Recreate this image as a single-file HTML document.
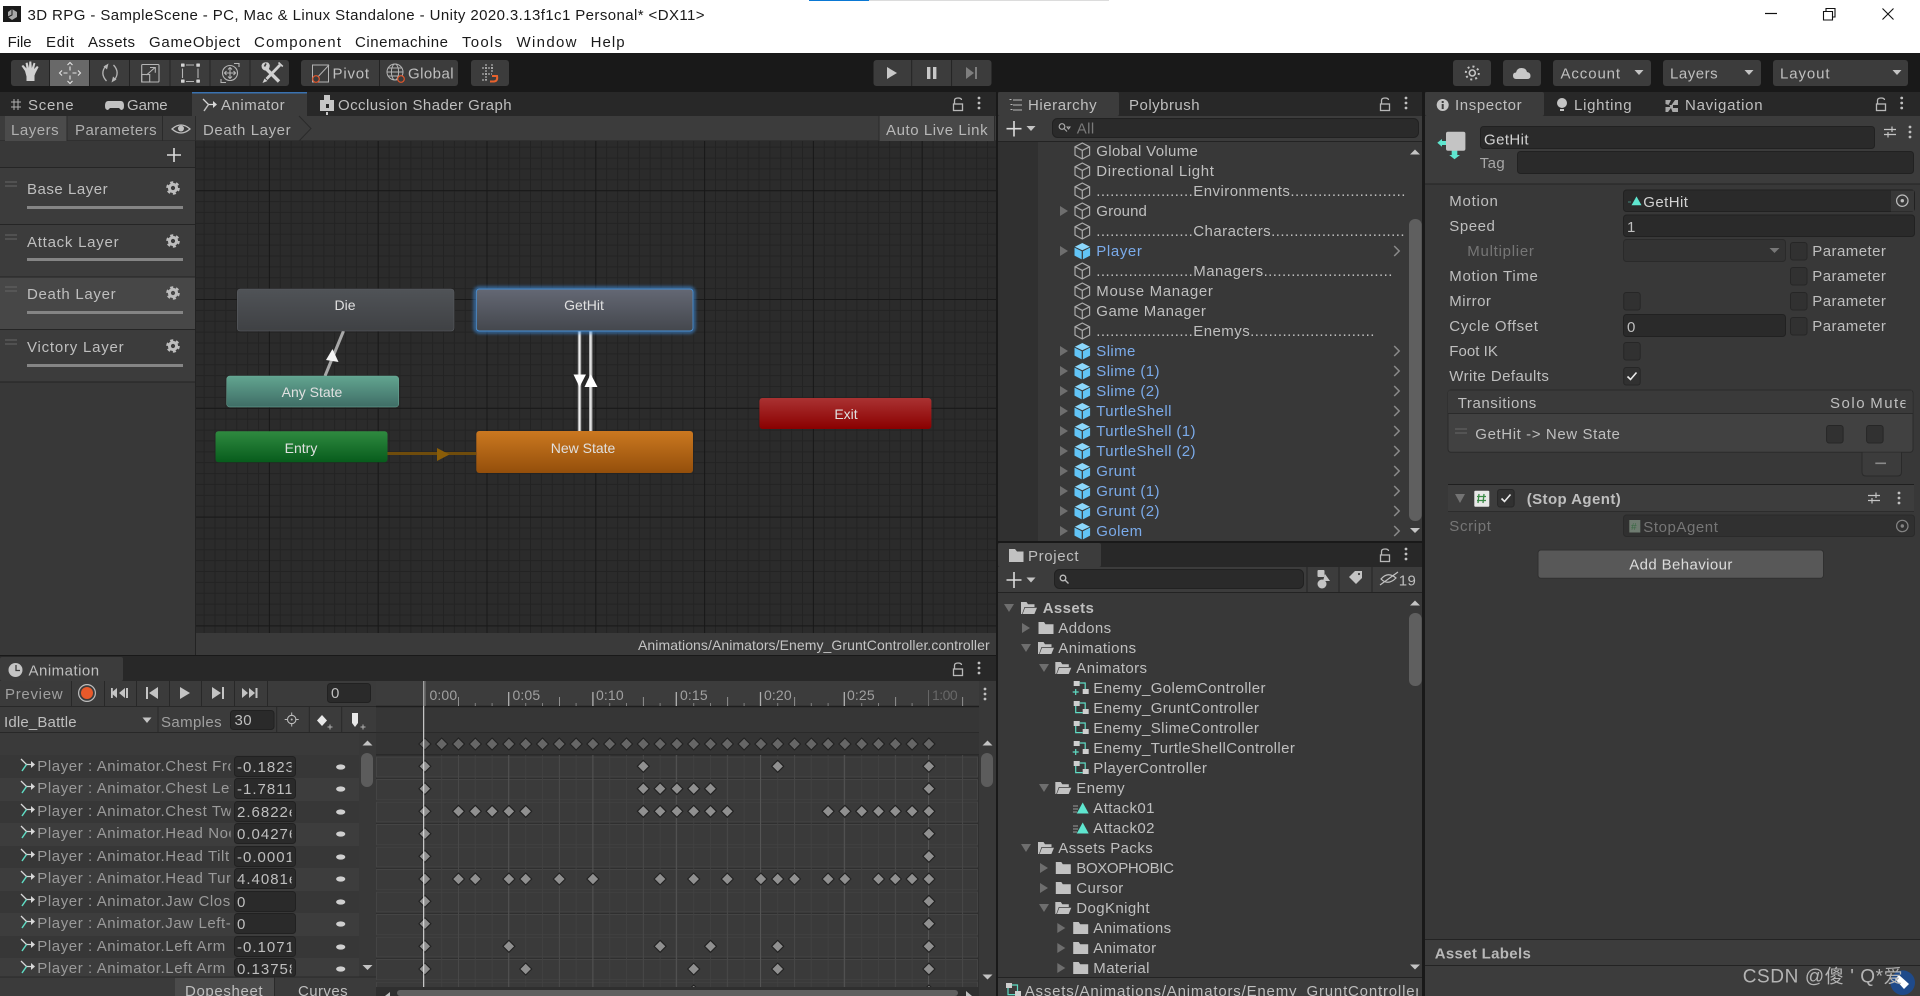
<!DOCTYPE html>
<html lang="en"><head><meta charset="utf-8"><title>Unity Editor</title>
<style>
html,body{margin:0;padding:0;width:1920px;height:996px;overflow:hidden;background:#191919}
svg{display:block}
text{font-family:"Liberation Sans","Noto Sans CJK SC",sans-serif;font-size:15px;fill:#bfbfbf;letter-spacing:.4px;white-space:pre}
.t{fill:#1a1a1a;letter-spacing:0}
.d{fill:#9a9a9a;letter-spacing:.58px}
.dd{fill:#767676}
.b{fill:#7babea}
.n{font-size:14px;fill:#e0e0e0;text-anchor:middle;letter-spacing:0}
.bd{font-weight:bold}
.v{letter-spacing:1px}
.h{letter-spacing:.45px}
</style></head><body>
<svg width="1920" height="996" viewBox="0 0 1920 996" xmlns="http://www.w3.org/2000/svg">
<defs>
<pattern id="g1" x="268.9" y="190.2" width="10.88" height="10.88" patternUnits="userSpaceOnUse"><path d="M.5 0V10.88M0 .5H10.88" stroke="#232323" stroke-width="1" fill="none"/></pattern>
<pattern id="g2" x="268.9" y="190.2" width="108.8" height="108.8" patternUnits="userSpaceOnUse"><path d="M.5 0V108.8M0 .5H108.8" stroke="#181818" stroke-width="1" fill="none"/></pattern>
<pattern id="f1" x="424.4" y="0" width="16.8" height="10" patternUnits="userSpaceOnUse"><path d="M.5 0V10" stroke="#424242" stroke-width="1"/></pattern>
<linearGradient id="nDie" x1="0" y1="0" x2="0" y2="1"><stop offset="0" stop-color="#505357"/><stop offset="1" stop-color="#3f4144"/></linearGradient>
<linearGradient id="nHit" x1="0" y1="0" x2="0" y2="1"><stop offset="0" stop-color="#646874"/><stop offset="1" stop-color="#44474d"/></linearGradient>
<linearGradient id="nAny" x1="0" y1="0" x2="0" y2="1"><stop offset="0" stop-color="#62a590"/><stop offset="1" stop-color="#3f6d66"/></linearGradient>
<linearGradient id="nEnt" x1="0" y1="0" x2="0" y2="1"><stop offset="0" stop-color="#2f8a40"/><stop offset="1" stop-color="#075c1c"/></linearGradient>
<linearGradient id="nNew" x1="0" y1="0" x2="0" y2="1"><stop offset="0" stop-color="#cb7820"/><stop offset="1" stop-color="#944f0b"/></linearGradient>
<linearGradient id="nExit" x1="0" y1="0" x2="0" y2="1"><stop offset="0" stop-color="#aa3232"/><stop offset="1" stop-color="#8a0000"/></linearGradient>
<filter id="bl" x="-10%" y="-30%" width="120%" height="160%"><feGaussianBlur stdDeviation="1.6"/></filter>
<clipPath id="cName"><rect x="20" y="740" width="210.5" height="240"/></clipPath>
<clipPath id="cVal"><rect x="234" y="740" width="57.5" height="240"/></clipPath>
<clipPath id="cKeys"><rect x="376" y="733" width="603" height="254"/></clipPath>
<clipPath id="cHier"><rect x="1040" y="142" width="366" height="399"/></clipPath>
<clipPath id="cFoot"><rect x="1000" y="978" width="418" height="18"/></clipPath>
<clipPath id="cMute"><rect x="1820" y="390" width="85.5" height="24"/></clipPath>
<g id="k"><path d="M0-6 6 0 0 6-6 0z" fill="#909090" stroke="#222" stroke-width="1.1"/></g>
<g id="ks"><path d="M0-6 6 0 0 6-6 0z" fill="#666" stroke="#222" stroke-width="1.1"/></g>
<g id="cube" fill="none" stroke="#aaa" stroke-width="1.2"><path d="M0-8 7.3-4.2V4L0 8-7.3 4V-4.2zM-7.3-4.2 0-.6 7.3-4.2M0-.6V8"/></g>
<g id="bcube"><path d="M0-8 7.5-4.3 0-.8-7.5-4.3z" fill="#8ad6fb"/><path d="M-7.8-3.4-.6.2V8.4L-7.8 4.6z" fill="#62c4f6"/><path d="M7.8-3.4 .6.2V8.4L7.8 4.6z" fill="#62c4f6"/></g>
<path id="ar" d="M-4-5 4 0-4 5z" fill="#6e6e6e"/>
<path id="ad" d="M-5-4H5L0 4z" fill="#6e6e6e"/>
<path id="ch" d="M-2.5-5 2.5 0-2.5 5" fill="none" stroke="#8a8a8a" stroke-width="1.5"/>
<path id="fc" d="M-7.5-6h5.5l1.5 2.2h8v9.8h-15z" fill="#c2c2c2"/>
<g id="fo"><path d="M-8 6V-6h5.5L-1-3.8h6.5V-1H-4.5L-7 6z" fill="#c2c2c2"/><path d="M-4-.2H8L5.4 6H-6.4z" fill="#c2c2c2"/></g>
<g id="ctl"><rect x="-7" y="-7" width="6" height="5" fill="#cfcfcf"/><rect x="2" y="1" width="6" height="5" fill="#cfcfcf"/><path d="M-1-5H4.5V1M-5-2V4.6H2" fill="none" stroke="#5fdcc4" stroke-width="1.2"/></g>
<g id="ctp"><rect x="-7" y="-7" width="6" height="5" fill="#cfcfcf"/><rect x="2" y="1" width="6" height="5" fill="#cfcfcf"/><path d="M-1-5H4.5V1M-5 1V7M-8 4H-2" fill="none" stroke="#5fdcc4" stroke-width="1.2"/></g>
<g id="tri"><path d="M-4.3 5.5 1.7-5.5 7.7 5.5z" fill="#5fe6cf"/><path d="M-8-2H-3M-8 1H-3M-8 4H-4" stroke="#9a9a9a" stroke-width="1"/></g>
<g id="lock" fill="none" stroke="#b8b8b8" stroke-width="1.3"><rect x="-4.5" y="0" width="9" height="6.5"/><path d="M-3.5 0V-3.5Q-3.5-6 0-6 3.5-6 3.5-4"/></g>
<g id="dots" fill="#c0c0c0"><circle cx="0" cy="-5" r="1.4"/><circle cx="0" cy="0" r="1.4"/><circle cx="0" cy="5" r="1.4"/></g>
<g id="gear"><circle r="3.6" fill="none" stroke="#bdbdbd" stroke-width="3"/><circle r="5.6" fill="none" stroke="#bdbdbd" stroke-width="2.4" stroke-dasharray="3 2.86"/></g>
<g id="box"><rect x="-8" y="-8.5" width="16.5" height="17.5" rx="2.5" fill="#313131" stroke="#262626" stroke-width="1"/></g>
<g id="sl" stroke="#c4c4c4" stroke-width="1.2" fill="none"><path d="M-6-2.5H6M-6 2.5H6M2-5.5V0M-2 0V5.5"/></g>
<path id="eq" d="M0 0H12M0 4H12" stroke="#666" stroke-width="1" fill="none"/>
<g id="crv"><path d="M-7-6-1.5-.5H5" fill="none" stroke="#d8d8d8" stroke-width="1.3"/><path d="M3-4 7-.5 3 3z" fill="#d8d8d8"/><path d="M-6 6-1.5-.5" fill="none" stroke="#5fdcc4" stroke-width="1.5"/></g>
<ellipse id="dash" cx="0" cy="0" rx="4.6" ry="2.6" fill="#cfcfcf"/>
<g id="tgt" fill="none"><circle r="5.7" stroke="#bdbdbd" stroke-width="1.2"/><circle r="1.7" fill="#bdbdbd"/></g>
</defs>

<!-- title bar -->
<rect x="0" y="0" width="1920" height="53" fill="#fff"/>
<rect x="809" y="0" width="300" height="1" fill="#dcdcdc"/><rect x="809" y="0" width="60" height="1" fill="#0a78d4"/>
<rect x="3" y="6" width="18" height="16" fill="#1a1a1a"/><path d="M12 9 17 12V17L12 20 8 17V12z" fill="#a8a8a8"/><path d="M12 9V15L8 17" stroke="#1a1a1a" fill="none"/>
<text class="t" x="27.5" y="20" textLength="677">3D RPG - SampleScene - PC, Mac &amp; Linux Standalone - Unity 2020.3.13f1c1 Personal* &lt;DX11&gt;</text>
<g>
<text class="t" x="7.6" y="47" textLength="24">File</text>
<text class="t" x="46" y="47" textLength="28">Edit</text>
<text class="t" x="88" y="47" textLength="47">Assets</text>
<text class="t" x="149" y="47" textLength="91">GameObject</text>
<text class="t" x="254" y="47" textLength="87">Component</text>
<text class="t" x="355" y="47" textLength="93">Cinemachine</text>
<text class="t" x="462" y="47" textLength="40">Tools</text>
<text class="t" x="516.5" y="47" textLength="60">Window</text>
<text class="t" x="590.6" y="47" textLength="34">Help</text>
</g>
<path d="M1765 13.5H1777" stroke="#111" stroke-width="1.2"/>
<path d="M1823.5 11.5h9v8.5h-9zM1826 11.5V8.5h9v8.5h-2.5" fill="none" stroke="#111" stroke-width="1.1"/>
<path d="M1882.5 8.5 1893.5 19.5M1893.5 8.5 1882.5 19.5" stroke="#111" stroke-width="1.1"/>

<!-- toolbar -->
<rect x="0" y="53" width="1920" height="39" fill="#191919"/>
<rect x="11" y="60" width="278" height="26" rx="3" fill="#3c3c3c"/>
<rect x="50" y="60" width="39" height="26" fill="#696969"/>
<path d="M49.5 60V86M89.5 60V86M129.5 60V86M170 60V86M210 60V86M250 60V86" stroke="#232323" stroke-width="1"/>
<path d="M25 71 21.5 66 23.2 65 26.5 68.5 25.6 63 27.6 62.5 29 68 29.3 61.5H31.3L31.8 68 33.6 62.7 35.4 63.3 34 69 37 66 38.6 67 35.5 73 34.5 75.5V81H26.5V76.5z" fill="#d0d0d0"/>
<g stroke="#e4e4e4" stroke-width="1.1" fill="none"><path d="M70 66.5V70.5M70 75.5V79.5M63.5 73H67.5M72.5 73H76.5M67.5 65 70 62.5 72.5 65M67.5 81 70 83.5 72.5 81M62 70.5 59.5 73 62 75.5M78 70.5 80.5 73 78 75.5"/></g>
<path d="M106.5 81Q99.5 73.5 106 65.5M113.5 65Q120.5 72.5 114 80.5" fill="none" stroke="#b4b4b4" stroke-width="1.3"/><path d="M103.5 66.5 108.5 63.5 107 69.5zM116.5 79.5 111.5 82.5 113 76.5z" fill="#b4b4b4"/>
<g fill="none" stroke="#b4b4b4" stroke-width="1.1"><rect x="141.7" y="64.5" width="17.3" height="17.5" rx="1"/><rect x="141.7" y="74.5" width="8" height="7.5"/><path d="M146.5 75 155 67.5M150 67.5H155.3V72.8"/></g>
<path d="M186 65H194M186 81.5H194M182.5 68.5V78M198 68.5V78" stroke="#b4b4b4" stroke-width="1.1" fill="none"/><g fill="#d4d4d4"><rect x="181" y="63.5" width="3.6" height="3.2" rx=".6"/><rect x="196.3" y="63.5" width="3.6" height="3.2" rx=".6"/><rect x="181" y="79.5" width="3.6" height="3.2" rx=".6"/><rect x="196.3" y="79.5" width="3.6" height="3.2" rx=".6"/></g>
<g fill="none" stroke="#b4b4b4" stroke-width="1.1"><circle cx="230" cy="73" r="7.5"/><path d="M230 67.5V78.5M224.5 73H235.5M228 69.5 230 67.5 232 69.5M228 76.5 230 78.5 232 76.5M226.5 71 224.5 73 226.5 75M233.5 71 235.5 73 233.5 75"/><path d="M234 63.5 239 63.5 239 67M226 82.5 221 82.5 221 79"/></g>
<path d="M265 67.5 279 81.5" fill="none" stroke="#d0d0d0" stroke-width="3.4"/><path d="M268 62.5Q262.5 61.5 261.5 65.5 261.5 69.5 265 70.5 268.5 71 269.5 67.5 270.5 64.5 268 62.5z" fill="#d0d0d0"/><path d="M266 63.5 264.5 66.5" stroke="#3c3c3c" stroke-width="1.6"/>
<path d="M280 65 266.5 79" fill="none" stroke="#d0d0d0" stroke-width="2.8"/><path d="M278.5 62.5 282.8 66.5" stroke="#d0d0d0" stroke-width="1.6"/><path d="M264.5 78.5 262.5 83 267.5 81z" fill="#d0d0d0"/>
<rect x="301" y="60" width="157" height="26" rx="3" fill="#3c3c3c"/><path d="M379.5 60V86" stroke="#232323"/>
<rect x="312.5" y="65" width="16" height="17" fill="none" stroke="#b4b4b4" stroke-width="1"/><path d="M329 65 315 80" stroke="#b4b4b4"/><circle cx="316" cy="79" r="3.3" fill="#3c3c3c" stroke="#e0562b" stroke-width="1.2"/>
<text x="332.5" y="78.5" textLength="37">Pivot</text>
<g fill="none" stroke="#b4b4b4" stroke-width="1"><circle cx="395" cy="72" r="8"/><ellipse cx="395" cy="72" rx="3.6" ry="8"/><path d="M387 72H403M388.5 68H401.5M388.5 76H401.5"/></g><circle cx="401" cy="79" r="3.3" fill="#3c3c3c" stroke="#e0562b" stroke-width="1.2"/>
<text x="408" y="78.5" textLength="46">Global</text>
<rect x="471" y="60" width="38" height="26" rx="3" fill="#3c3c3c"/>
<path d="M482 68H494M482 74H492M486 64V80M492 64V72M482 80H487" fill="none" stroke="#c8c8c8" stroke-width="1" stroke-dasharray="2 1"/><path d="M492 76H497Q498 81 494 81.5H490" fill="none" stroke="#e8622d" stroke-width="2"/>
<rect x="873.5" y="60" width="118" height="26" rx="3" fill="#3c3c3c"/><path d="M911.7 60V86M951.6 60V86" stroke="#232323"/>
<path d="M887 67 897 73 887 79z" fill="#c8c8c8"/>
<rect x="927" y="67" width="3.4" height="12" fill="#c8c8c8"/><rect x="933" y="67" width="3.4" height="12" fill="#c8c8c8"/>
<path d="M966 67 974 73 966 79z" fill="#7e7e7e"/><rect x="975" y="67" width="2" height="12" fill="#7e7e7e"/>
<rect x="1453" y="60" width="38" height="26" rx="3" fill="#3c3c3c"/><rect x="1503" y="60" width="38" height="26" rx="3" fill="#3c3c3c"/>
<circle cx="1472.3" cy="73" r="3" fill="none" stroke="#c4c4c4" stroke-width="1.6"/><circle cx="1472.3" cy="73" r="6.5" fill="none" stroke="#c4c4c4" stroke-width="2" stroke-dasharray="2 3.1"/>
<path d="M1516 79Q1513 79 1513 75.5 1513 72.5 1516 72.5 1517 68 1521.5 68 1526 68 1527 72 1530.5 72.5 1530.5 76 1530.5 79 1527 79z" fill="#c8c8c8"/>
<rect x="1553" y="60" width="98" height="26" rx="3" fill="#3c3c3c"/><rect x="1663" y="60" width="98" height="26" rx="3" fill="#3c3c3c"/><rect x="1773" y="60" width="135" height="26" rx="3" fill="#3c3c3c"/>
<text x="1560.5" y="78.5" textLength="60">Account</text><text x="1670" y="78.5" textLength="48">Layers</text><text x="1780" y="78.5" textLength="50">Layout</text>
<path d="M1634.5 70H1643.5L1639 75zM1744.5 70H1753.5L1749 75zM1892.5 70H1901.5L1897 75z" fill="#c4c4c4"/>

<!-- Scene/Animator panel tabs -->
<rect x="0" y="92" width="996" height="24" fill="#282828"/>
<rect x="192" y="92" width="115" height="24" fill="#3c3c3c"/><rect x="192" y="92" width="115" height="1.5" fill="#3a72b0"/>
<path d="M11 102H21M11 107H21M14 99V110M18 99V110" stroke="#b0b0b0" stroke-width="1" fill="none"/>
<text x="28" y="110" textLength="46">Scene</text>
<path d="M108 101H121Q124 101 124 106 124 110 121 110L119 108H110L108 110Q105 110 105 106 105 101 108 101z" fill="#c0c0c0"/>
<text x="127" y="110" textLength="41">Game</text>
<use href="#crv" x="210" y="105" style="filter:grayscale(1)"/>
<text x="221" y="110" textLength="64">Animator</text>
<rect x="320" y="100" width="14" height="11" fill="#c6c6c6"/><rect x="324" y="95" width="6" height="5" fill="#c6c6c6"/><rect x="326" y="112" width="2" height="3" fill="#c6c6c6"/><rect x="326" y="104" width="3" height="4" fill="#282828"/>
<text x="338" y="110" textLength="174">Occlusion Shader Graph</text>
<use href="#lock" x="958" y="104"/><use href="#dots" x="979" y="103"/>

<!-- Animator toolbar -->
<rect x="0" y="116" width="996" height="25" fill="#3c3c3c"/><path d="M0 141H996" stroke="#232323" stroke-width="1"/>
<rect x="5" y="116" width="62" height="25" fill="#4b4b4b"/><path d="M67 116V141M162.5 116V141M195.5 116V141" stroke="#2a2a2a"/>
<text x="11" y="135" textLength="48" style="fill:#b0b0b0">Layers</text>
<text x="75" y="135" textLength="82" style="fill:#b0b0b0">Parameters</text>
<path d="M172 129Q181 121 190 129 181 137 172 129z" fill="none" stroke="#c0c0c0" stroke-width="1.3"/><circle cx="181" cy="128.5" r="3" fill="#c0c0c0"/>
<text x="203" y="135" textLength="88" style="fill:#b8b8b8">Death Layer</text>
<path d="M299 116 311 128.5 299 141" fill="none" stroke="#2a2a2a" stroke-width="1"/>
<rect x="879" y="116" width="115" height="25" fill="#484848"/><path d="M879 116V141M994.5 116V141" stroke="#2a2a2a"/>
<text x="886" y="135" textLength="102" style="fill:#b8b8b8">Auto Live Link</text>

<!-- Layers panel -->
<rect x="0" y="141" width="195" height="514" fill="#383838"/>
<rect x="0" y="168" width="195" height="56" fill="#3c3c3c"/><rect x="0" y="225" width="195" height="52" fill="#3c3c3c"/><rect x="0" y="277" width="195" height="52" fill="#474747"/><rect x="0" y="330" width="195" height="52" fill="#3c3c3c"/>
<path d="M0 167.5H195M0 224.5H195M0 277H195M0 329.5H195M0 382H195" stroke="#252525" stroke-width="1"/>
<path d="M174 148V162M167 155H181" stroke="#dcdcdc" stroke-width="1.6"/>
<use href="#eq" x="5" y="182"/><use href="#eq" x="5" y="235"/><use href="#eq" x="5" y="287"/><use href="#eq" x="5" y="340"/>
<text x="27" y="194" textLength="81">Base Layer</text><text x="27" y="247" textLength="92">Attack Layer</text><text x="27" y="299" textLength="89">Death Layer</text><text x="27" y="352" textLength="97">Victory Layer</text>
<rect x="27" y="206" width="156" height="3" fill="#858585"/><rect x="27" y="258" width="156" height="3" fill="#858585"/><rect x="27" y="311" width="156" height="3" fill="#858585"/><rect x="27" y="364" width="156" height="3" fill="#858585"/>
<use href="#gear" x="173" y="188"/><use href="#gear" x="173" y="241"/><use href="#gear" x="173" y="293"/><use href="#gear" x="173" y="346"/>

<!-- Graph -->
<rect x="195" y="141" width="801" height="492" fill="#2b2b2b"/>
<rect x="195" y="141" width="801" height="492" fill="url(#g1)"/>
<rect x="195" y="141" width="801" height="492" fill="url(#g2)"/>
<path d="M325 376 343.5 331" stroke="#a8a8a8" stroke-width="3"/>
<path d="M332.5 349 338.5 362 326 360z" fill="#f4f4f4"/>
<path d="M579.5 331V431M590.7 331V431" stroke="#b4b4b4" stroke-width="3.4"/>
<path d="M579.5 331V431M590.7 331V431" stroke="#eee" stroke-width="1"/>
<path d="M573.5 374.5H586L579.5 387z" fill="#fff"/><path d="M584.5 387H597.5L590.7 374z" fill="#fff"/>
<path d="M387 453.5H476" stroke="#6f4c0c" stroke-width="3"/><path d="M437 448 449.5 454.5 437 461z" fill="#8a5d08"/>
<rect x="237.3" y="289" width="216.7" height="42" rx="3" fill="url(#nDie)" stroke="#5a5d62" stroke-width=".6"/>
<rect x="475" y="288" width="219" height="44" rx="4" fill="none" stroke="#3d8ee0" stroke-width="2.4" opacity=".85" filter="url(#bl)"/>
<rect x="476.3" y="289" width="216.7" height="42" rx="3" fill="url(#nHit)" stroke="#4a8ed0" stroke-width=".9"/>
<rect x="226.7" y="376" width="172" height="31" rx="3" fill="url(#nAny)" stroke="#6fae9c" stroke-width=".5"/>
<rect x="215.5" y="431.3" width="172" height="31" rx="3" fill="url(#nEnt)"/>
<rect x="476.3" y="431" width="216.7" height="42" rx="3" fill="url(#nNew)"/>
<rect x="759.4" y="398" width="172" height="31" rx="3" fill="url(#nExit)"/>
<text class="n" x="345" y="310">Die</text><text class="n" x="584" y="310">GetHit</text><text class="n" x="312" y="397">Any State</text><text class="n" x="301" y="453">Entry</text><text class="n" x="583" y="453">New State</text><text class="n" x="846" y="419">Exit</text>
<rect x="195" y="633" width="801" height="22" fill="#3a3a3a"/>
<path d="M195.5 141V655" stroke="#232323"/>
<text x="638" y="650" textLength="352" style="fill:#c4c4c4;font-size:14px">Animations/Animators/Enemy_GruntController.controller</text>

<!-- Animation panel -->
<rect x="0" y="656" width="996" height="25" fill="#282828"/>
<rect x="0" y="657" width="123" height="24" rx="2" fill="#3c3c3c"/>
<circle cx="15.5" cy="670" r="7" fill="#c4c4c4"/><path d="M16 665V670.5H20" fill="none" stroke="#3c3c3c" stroke-width="1.3"/>
<text x="28.5" y="675.5" textLength="71">Animation</text>
<use href="#lock" x="958" y="669"/><use href="#dots" x="979" y="668"/>
<rect x="0" y="681" width="376" height="315" fill="#3b3b3b"/>
<path d="M0 706.5H376M0 732.5H376M0 977H376M71.5 681V706M104.5 681V706M136.5 681V706M169.5 681V706M201.5 681V706M234.5 681V706M267.5 681V706M158 707V732M276.7 707V732M309.3 707V732M341.7 707V732" stroke="#282828"/>
<text x="5" y="699" textLength="58" style="fill:#a0a0a0">Preview</text>
<circle cx="87" cy="693" r="8.4" fill="none" stroke="#bdbdbd" stroke-width="1.2"/><circle cx="87" cy="693" r="6" fill="#e8592a"/>
<path d="M117 688 111 693 117 698zM125 688 119 693 125 698z" fill="#c4c4c4"/><rect x="111" y="688" width="1.8" height="10" fill="#c4c4c4"/><rect x="126" y="688" width="2" height="10" fill="#c4c4c4"/>
<rect x="146" y="687" width="2" height="12" fill="#c4c4c4"/><path d="M158 687 149 693 158 699z" fill="#c4c4c4"/>
<path d="M180 687 190 693 180 699z" fill="#c4c4c4"/>
<path d="M212 687 221 693 212 699z" fill="#c4c4c4"/><rect x="222" y="687" width="2" height="12" fill="#c4c4c4"/>
<path d="M242 688 248 693 242 698zM249 688 255 693 249 698z" fill="#c4c4c4"/><rect x="255.5" y="688" width="2" height="10" fill="#c4c4c4"/>
<rect x="327.5" y="683.5" width="43" height="19" rx="3" fill="#2a2a2a" stroke="#212121"/>
<text x="331" y="698">0</text>
<text x="4" y="727" textLength="73">Idle_Battle</text>
<path d="M142.5 717.5H151.5L147 723z" fill="#c4c4c4"/>
<text x="161" y="727" textLength="61" style="fill:#a0a0a0">Samples</text>
<rect x="230.5" y="710.5" width="43.5" height="19" rx="3" fill="#2a2a2a" stroke="#212121"/>
<text x="234.5" y="725">30</text>
<circle cx="291.7" cy="719.5" r="4.2" fill="none" stroke="#bdbdbd" stroke-width="1.1"/><path d="M291.7 712.5V716M291.7 723V726.5M284.7 719.5H288M295.4 719.5H298.7" stroke="#bdbdbd"/><circle cx="291.7" cy="719.5" r="1" fill="#bdbdbd"/>
<path d="M322 715 327 720.5 322 726 317 720.5z" fill="#e8e8e8"/><path d="M330 724.5V729.5M327.5 727H332.5" stroke="#b0b0b0"/>
<path d="M352 713H358V723L355 727 352 723z" fill="#e8e8e8"/><path d="M363 724.5V729.5M360.5 727H365.5" stroke="#b0b0b0"/>
<!-- list rows -->
<rect x="0" y="733" width="359" height="22" fill="#3a3a3a"/>
<rect x="0" y="755" width="359" height="23" fill="#373737"/><rect x="0" y="778" width="359" height="23" fill="#3d3d3d"/><rect x="0" y="801" width="359" height="22" fill="#373737"/><rect x="0" y="823" width="359" height="23" fill="#3d3d3d"/><rect x="0" y="846" width="359" height="22" fill="#373737"/><rect x="0" y="868" width="359" height="23" fill="#3d3d3d"/><rect x="0" y="891" width="359" height="22" fill="#373737"/><rect x="0" y="913" width="359" height="23" fill="#3d3d3d"/><rect x="0" y="936" width="359" height="22" fill="#373737"/><rect x="0" y="958" width="359" height="19" fill="#3d3d3d"/>
<use href="#crv" x="28" y="765"/><use href="#crv" x="28" y="787"/><use href="#crv" x="28" y="810"/><use href="#crv" x="28" y="832"/><use href="#crv" x="28" y="855"/><use href="#crv" x="28" y="877"/><use href="#crv" x="28" y="900"/><use href="#crv" x="28" y="922"/><use href="#crv" x="28" y="945"/><use href="#crv" x="28" y="967"/>
<g clip-path="url(#cName)">
<text class="d" x="37.3" y="771">Player : Animator.Chest Front-Back</text>
<text class="d" x="37.3" y="793">Player : Animator.Chest Left-Right</text>
<text class="d" x="37.3" y="816">Player : Animator.Chest Twist Left-Right</text>
<text class="d" x="37.3" y="838">Player : Animator.Head Nod Down-Up</text>
<text class="d" x="37.3" y="861">Player : Animator.Head Tilt Left-Right</text>
<text class="d" x="37.3" y="883">Player : Animator.Head Turn Left-Right</text>
<text class="d" x="37.3" y="906">Player : Animator.Jaw Close</text>
<text class="d" x="37.3" y="928">Player : Animator.Jaw Left-Right</text>
<text class="d" x="37.3" y="951">Player : Animator.Left Arm Down-Up</text>
<text class="d" x="37.3" y="973">Player : Animator.Left Arm Front-Back</text>
</g>
<g fill="#2a2a2a" stroke="#212121"><rect x="234.5" y="756.5" width="61" height="20" rx="3"/><rect x="234.5" y="778.5" width="61" height="20" rx="3"/><rect x="234.5" y="801.5" width="61" height="20" rx="3"/><rect x="234.5" y="823.5" width="61" height="20" rx="3"/><rect x="234.5" y="846.5" width="61" height="20" rx="3"/><rect x="234.5" y="868.5" width="61" height="20" rx="3"/><rect x="234.5" y="891.5" width="61" height="20" rx="3"/><rect x="234.5" y="913.5" width="61" height="20" rx="3"/><rect x="234.5" y="936.5" width="61" height="20" rx="3"/><rect x="234.5" y="958.5" width="61" height="18" rx="3"/></g>
<g clip-path="url(#cVal)">
<text class="v" x="237" y="772">-0.1823</text><text class="v" x="237" y="794">-1.7811</text><text class="v" x="237" y="817">2.6822e</text><text class="v" x="237" y="839">0.04276</text><text class="v" x="237" y="862">-0.0001</text><text class="v" x="237" y="884">4.4081e</text><text class="v" x="237" y="907">0</text><text class="v" x="237" y="929">0</text><text class="v" x="237" y="952">-0.1071</text><text class="v" x="237" y="974">0.13758</text>
</g>
<use href="#dash" x="340.7" y="767"/><use href="#dash" x="340.7" y="789"/><use href="#dash" x="340.7" y="812"/><use href="#dash" x="340.7" y="834"/><use href="#dash" x="340.7" y="857"/><use href="#dash" x="340.7" y="879"/><use href="#dash" x="340.7" y="902"/><use href="#dash" x="340.7" y="924"/><use href="#dash" x="340.7" y="947"/><use href="#dash" x="340.7" y="969"/>
<rect x="359" y="733" width="17" height="244" fill="#383838"/>
<rect x="361" y="753" width="12" height="34" rx="6" fill="#5c5c5c"/>
<path d="M362.5 745.5H372.5L367.5 740.5zM362.5 965H372.5L367.5 970z" fill="#c4c4c4"/>
<path d="M0 977H376" stroke="#2a2a2a"/>
<rect x="175" y="978" width="99" height="18" fill="#4b4b4b"/>
<text x="185" y="996" textLength="78">Dopesheet</text><text x="298" y="996" textLength="50">Curves</text>
<path d="M274.5 977V996" stroke="#2a2a2a"/>

<!-- Dopesheet -->
<rect x="376" y="681" width="620" height="315" fill="#2f2f2f"/>
<rect x="376" y="681" width="603" height="25" fill="#3c3c3c"/>
<rect x="376" y="707" width="603" height="26" fill="#363636"/>
<rect x="376" y="733" width="603" height="22" fill="#343434"/>
<path d="M376 706.5H979" stroke="#1e1e1e" stroke-width="1.4"/><path d="M376 732.5H979M376 754.5H979" stroke="#2a2a2a"/>
<text x="429.5" y="700" style="font-size:14px;fill:#a0a0a0" textLength="28">0:00</text><text x="512.5" y="700" style="font-size:14px;fill:#a0a0a0" textLength="28">0:05</text><text x="596" y="700" style="font-size:14px;fill:#a0a0a0" textLength="28">0:10</text><text x="680" y="700" style="font-size:14px;fill:#a0a0a0" textLength="28">0:15</text><text x="764" y="700" style="font-size:14px;fill:#a0a0a0" textLength="28">0:20</text><text x="847" y="700" style="font-size:14px;fill:#a0a0a0" textLength="28">0:25</text><text x="932" y="700" style="font-size:14px;fill:#686868" textLength="26">1:00</text>
<path d="M508.7 692V706M592.9 692V706M676.3 692V706M760.5 692V706M844.3 692V706" stroke="#b0b0b0" stroke-width="1.3"/>
<path d="M928.5 690V706" stroke="#666" stroke-width="1"/>
<path d="M458.5 697V706M559.5 697V706M643.4 697V706M727.6 697V706M794.6 697V706M895.6 697V706M962.6 697V706" stroke="#909090"/>
<path d="M475.3 703V706M492.1 703V706M525.7 703V706M542.5 703V706M576.1 703V706M609.7 703V706M626.5 703V706M660.1 703V706M693.7 703V706M710.5 703V706M744.1 703V706M777.7 703V706M811.3 703V706M828.1 703V706M861.7 703V706M878.5 703V706M912.1 703V706" stroke="#808080"/>
<g fill="#3a3a3a" stroke="#444">
<rect x="376.5" y="757" width="601" height="20"/><rect x="376.5" y="779.5" width="601" height="20.5"/><rect x="376.5" y="802" width="601" height="20"/><rect x="376.5" y="824.5" width="601" height="20.5"/><rect x="376.5" y="847" width="601" height="20"/><rect x="376.5" y="869.5" width="601" height="20.5"/><rect x="376.5" y="892" width="601" height="20"/><rect x="376.5" y="914.5" width="601" height="20.5"/><rect x="376.5" y="937" width="601" height="20"/><rect x="376.5" y="959.5" width="601" height="20.5"/><rect x="376.5" y="982" width="601" height="14"/>
</g>
<rect x="424" y="755" width="553" height="232" fill="url(#f1)" opacity=".8"/>
<path d="M458.5 755V987M559.5 755V987M643.4 755V987M727.6 755V987M794.6 755V987M895.6 755V987M962.6 755V987" stroke="#484848"/>
<path d="M508.7 755V987M592.9 755V987M676.3 755V987M760.5 755V987M844.3 755V987M928.5 755V987" stroke="#545454"/>
<g clip-path="url(#cKeys)">
<g transform="translate(0 744)"><use href="#ks" x="424.9"/><use href="#ks" x="441.7"/><use href="#ks" x="458.5"/><use href="#ks" x="475.3"/><use href="#ks" x="492.1"/><use href="#ks" x="508.9"/><use href="#ks" x="525.7"/><use href="#ks" x="542.5"/><use href="#ks" x="559.3"/><use href="#ks" x="576.1"/><use href="#ks" x="592.9"/><use href="#ks" x="609.7"/><use href="#ks" x="626.5"/><use href="#ks" x="643.3"/><use href="#ks" x="660.1"/><use href="#ks" x="676.9"/><use href="#ks" x="693.7"/><use href="#ks" x="710.5"/><use href="#ks" x="727.3"/><use href="#ks" x="744.1"/><use href="#ks" x="760.9"/><use href="#ks" x="777.7"/><use href="#ks" x="794.5"/><use href="#ks" x="811.3"/><use href="#ks" x="828.1"/><use href="#ks" x="844.9"/><use href="#ks" x="861.7"/><use href="#ks" x="878.5"/><use href="#ks" x="895.3"/><use href="#ks" x="912.1"/><use href="#ks" x="928.9"/></g>
<g transform="translate(0 766.3)"><use href="#k" x="424.9"/><use href="#k" x="643.3"/><use href="#k" x="777.7"/><use href="#k" x="928.9"/></g>
<g transform="translate(0 788.7)"><use href="#k" x="424.9"/><use href="#k" x="643.3"/><use href="#k" x="660.1"/><use href="#k" x="676.9"/><use href="#k" x="693.7"/><use href="#k" x="710.5"/><use href="#k" x="928.9"/></g>
<g transform="translate(0 811.3)"><use href="#k" x="424.9"/><use href="#k" x="458.5"/><use href="#k" x="475.3"/><use href="#k" x="492.1"/><use href="#k" x="508.9"/><use href="#k" x="525.7"/><use href="#k" x="643.3"/><use href="#k" x="660.1"/><use href="#k" x="676.9"/><use href="#k" x="693.7"/><use href="#k" x="710.5"/><use href="#k" x="727.3"/><use href="#k" x="828.1"/><use href="#k" x="844.9"/><use href="#k" x="861.7"/><use href="#k" x="878.5"/><use href="#k" x="895.3"/><use href="#k" x="912.1"/><use href="#k" x="928.9"/></g>
<g transform="translate(0 833.7)"><use href="#k" x="424.9"/><use href="#k" x="928.9"/></g>
<g transform="translate(0 856.3)"><use href="#k" x="424.9"/><use href="#k" x="928.9"/></g>
<g transform="translate(0 879)"><use href="#k" x="424.9"/><use href="#k" x="458.5"/><use href="#k" x="475.3"/><use href="#k" x="508.9"/><use href="#k" x="525.7"/><use href="#k" x="559.3"/><use href="#k" x="592.9"/><use href="#k" x="660.1"/><use href="#k" x="693.7"/><use href="#k" x="727.3"/><use href="#k" x="760.9"/><use href="#k" x="777.7"/><use href="#k" x="794.5"/><use href="#k" x="828.1"/><use href="#k" x="844.9"/><use href="#k" x="878.5"/><use href="#k" x="895.3"/><use href="#k" x="912.1"/><use href="#k" x="928.9"/></g>
<g transform="translate(0 901.3)"><use href="#k" x="424.9"/><use href="#k" x="928.9"/></g>
<g transform="translate(0 923.7)"><use href="#k" x="424.9"/><use href="#k" x="928.9"/></g>
<g transform="translate(0 946.3)"><use href="#k" x="424.9"/><use href="#k" x="508.9"/><use href="#k" x="660.1"/><use href="#k" x="710.5"/><use href="#k" x="777.7"/><use href="#k" x="928.9"/></g>
<g transform="translate(0 969)"><use href="#k" x="424.9"/><use href="#k" x="525.7"/><use href="#k" x="693.7"/><use href="#k" x="777.7"/><use href="#k" x="928.9"/></g>
<g transform="translate(0 991)"><use href="#k" x="693.7"/><use href="#k" x="928.9"/></g>
</g>
<rect x="423.2" y="681" width="1" height="306" fill="#e8e8e8"/>
<rect x="423" y="681" width="3" height="25" fill="#7a7a7a" opacity=".5"/>
<rect x="376" y="987" width="620" height="9" fill="#2f2f2f"/>
<rect x="397" y="990" width="561" height="6" rx="3" fill="#606060"/>
<path d="M390 992 385 996H390zM966 991 972 996H966z" fill="#c0c0c0"/>
<rect x="979" y="681" width="17" height="315" fill="#383838"/>
<use href="#dots" x="985" y="694"/>
<rect x="981" y="753" width="12" height="34" rx="6" fill="#5c5c5c"/>
<path d="M982.5 745.5H992.5L987.5 740.5zM982.5 974.5H992.5L987.5 979.5z" fill="#c4c4c4"/>

<!-- Hierarchy -->
<rect x="998" y="92" width="424" height="24" fill="#282828"/>
<rect x="998" y="92" width="121" height="24" rx="2" fill="#3c3c3c"/>
<path d="M1013 100H1022M1013 105H1022M1013 110H1022" stroke="#b8b8b8" stroke-width="1.1"/><path d="M1009.5 99.5H1011.5M1010.5 104.5H1012.5M1010.5 109.5H1012.5" stroke="#b8b8b8"/>
<text x="1028" y="110" textLength="69">Hierarchy</text><text x="1129" y="110" textLength="71">Polybrush</text>
<use href="#lock" x="1385" y="104"/><use href="#dots" x="1406" y="103"/>
<rect x="998" y="116" width="424" height="25.5" fill="#3c3c3c"/><path d="M998 141.5H1422" stroke="#232323"/>
<path d="M1014 121V136.5M1006.5 128.7H1021.5" stroke="#dcdcdc" stroke-width="1.6"/><path d="M1026.5 126H1035.5L1031 131z" fill="#c4c4c4"/>
<rect x="1052.5" y="118.5" width="366" height="19" rx="5" fill="#2a2a2a" stroke="#212121"/>
<circle cx="1062" cy="126.5" r="2.8" fill="none" stroke="#aaa" stroke-width="1.2"/><path d="M1064 128.5 1067 131.5M1067 127H1070L1068.5 129z" stroke="#aaa" fill="none"/>
<text x="1076.7" y="133.5" style="fill:#7a7a7a">All</text>
<rect x="998" y="142" width="424" height="399" fill="#383838"/>
<rect x="998" y="142" width="40" height="399" fill="#303030"/>
<use href="#cube" x="1082.3" y="151"/><use href="#cube" x="1082.3" y="171"/><use href="#cube" x="1082.3" y="191"/><use href="#cube" x="1082.3" y="211"/><use href="#cube" x="1082.3" y="231"/><use href="#bcube" x="1082.3" y="251"/><use href="#cube" x="1082.3" y="271"/><use href="#cube" x="1082.3" y="291"/><use href="#cube" x="1082.3" y="311"/><use href="#cube" x="1082.3" y="331"/>
<use href="#bcube" x="1082.3" y="351"/><use href="#bcube" x="1082.3" y="371"/><use href="#bcube" x="1082.3" y="391"/><use href="#bcube" x="1082.3" y="411"/><use href="#bcube" x="1082.3" y="431"/><use href="#bcube" x="1082.3" y="451"/><use href="#bcube" x="1082.3" y="471"/><use href="#bcube" x="1082.3" y="491"/><use href="#bcube" x="1082.3" y="511"/><use href="#bcube" x="1082.3" y="531"/>
<use href="#ar" x="1064" y="211"/><use href="#ar" x="1064" y="251"/><use href="#ar" x="1064" y="351"/><use href="#ar" x="1064" y="371"/><use href="#ar" x="1064" y="391"/><use href="#ar" x="1064" y="411"/><use href="#ar" x="1064" y="431"/><use href="#ar" x="1064" y="451"/><use href="#ar" x="1064" y="471"/><use href="#ar" x="1064" y="491"/><use href="#ar" x="1064" y="511"/><use href="#ar" x="1064" y="531"/>
<use href="#ch" x="1396.7" y="251"/><use href="#ch" x="1396.7" y="351"/><use href="#ch" x="1396.7" y="371"/><use href="#ch" x="1396.7" y="391"/><use href="#ch" x="1396.7" y="411"/><use href="#ch" x="1396.7" y="431"/><use href="#ch" x="1396.7" y="451"/><use href="#ch" x="1396.7" y="471"/><use href="#ch" x="1396.7" y="491"/><use href="#ch" x="1396.7" y="511"/><use href="#ch" x="1396.7" y="531"/>
<g clip-path="url(#cHier)">
<text x="1096.3" y="156" textLength="102">Global Volume</text>
<text x="1096.3" y="176" textLength="118">Directional Light</text>
<text class="h" x="1096.3" y="196">.....................Environments...........................</text>
<text x="1096.3" y="216" textLength="51">Ground</text>
<text class="h" x="1096.3" y="236">.....................Characters.............................</text>
<text class="b" x="1096.3" y="256" textLength="46">Player</text>
<text class="h" x="1096.3" y="276">.....................Managers............................</text>
<text x="1096.3" y="296" textLength="117">Mouse Manager</text>
<text x="1096.3" y="316" textLength="110">Game Manager</text>
<text class="h" x="1096.3" y="336">.....................Enemys...........................</text>
<text class="b" x="1096.3" y="356">Slime</text>
<text class="b" x="1096.3" y="376">Slime (1)</text>
<text class="b" x="1096.3" y="396">Slime (2)</text>
<text class="b" x="1096.3" y="416">TurtleShell</text>
<text class="b" x="1096.3" y="436">TurtleShell (1)</text>
<text class="b" x="1096.3" y="456">TurtleShell (2)</text>
<text class="b" x="1096.3" y="476">Grunt</text>
<text class="b" x="1096.3" y="496">Grunt (1)</text>
<text class="b" x="1096.3" y="516">Grunt (2)</text>
<text class="b" x="1096.3" y="536">Golem</text>
</g>
<rect x="1409" y="219" width="12.7" height="302" rx="6" fill="#5f5f5f"/>
<path d="M1410 154.5H1420L1415 149.5zM1410 528H1420L1415 533z" fill="#c4c4c4"/>

<!-- Project -->
<rect x="998" y="543" width="424" height="24" fill="#282828"/>
<rect x="998" y="543" width="103" height="24" rx="2" fill="#3c3c3c"/>
<path d="M1009 549H1015L1017 551.5H1023.5V562H1009z" fill="#c2c2c2"/>
<text x="1028" y="561" textLength="51">Project</text>
<use href="#lock" x="1385" y="555"/><use href="#dots" x="1406" y="554"/>
<rect x="998" y="567" width="424" height="25" fill="#3c3c3c"/><path d="M998 592.5H1422M1307 567V592M1339 567V592M1372 567V592" stroke="#232323"/>
<path d="M1014 572V588M1006.5 580H1021.5" stroke="#dcdcdc" stroke-width="1.6"/><path d="M1026.5 577.5H1035.5L1031 582.5z" fill="#c4c4c4"/>
<rect x="1054.5" y="569.5" width="249" height="19" rx="5" fill="#2a2a2a" stroke="#212121"/>
<circle cx="1063" cy="578" r="2.8" fill="none" stroke="#bbb" stroke-width="1.3"/><path d="M1065 580 1068.5 583.5" stroke="#bbb" stroke-width="1.3"/>
<circle cx="1322" cy="584" r="4.5" fill="#c4c4c4"/><rect x="1317.5" y="570" width="7" height="7" rx="1" fill="#c4c4c4"/><path d="M1325 574 1330 581H1323z" fill="#c4c4c4"/>
<path d="M1349 577 1355 571H1362V578L1356 584z" fill="#c4c4c4"/><circle cx="1359" cy="574" r="1.1" fill="#3c3c3c"/>
<path d="M1381 579Q1388 571 1396 578 1388 586 1381 579zM1380 585 1398 572" fill="none" stroke="#c0c0c0" stroke-width="1.2"/>
<text x="1398.7" y="585.5" textLength="17.5">19</text>
<rect x="998" y="593" width="424" height="384.5" fill="#383838"/>
<use href="#ad" x="1009" y="608"/><use href="#fo" x="1029" y="608"/><text class="bd" x="1042.7" y="613">Assets</text>
<use href="#ar" x="1026" y="628"/><use href="#fc" x="1046" y="628"/><text x="1058.3" y="633">Addons</text>
<use href="#ad" x="1026" y="648"/><use href="#fo" x="1046" y="648"/><text x="1058.3" y="653">Animations</text>
<use href="#ad" x="1044" y="668"/><use href="#fo" x="1063.3" y="668"/><text x="1076.3" y="673">Animators</text>
<use href="#ctp" x="1080.7" y="688"/><text x="1093.3" y="693">Enemy_GolemController</text>
<use href="#ctl" x="1080.7" y="708"/><text x="1093.3" y="713">Enemy_GruntController</text>
<use href="#ctl" x="1080.7" y="728"/><text x="1093.3" y="733">Enemy_SlimeController</text>
<use href="#ctp" x="1080.7" y="748"/><text x="1093.3" y="753">Enemy_TurtleShellController</text>
<use href="#ctl" x="1080.7" y="768"/><text x="1093.3" y="773">PlayerController</text>
<use href="#ad" x="1044" y="788"/><use href="#fo" x="1063.3" y="788"/><text x="1076.3" y="793">Enemy</text>
<use href="#tri" x="1081" y="808"/><text x="1093.3" y="813">Attack01</text>
<use href="#tri" x="1081" y="828"/><text x="1093.3" y="833">Attack02</text>
<use href="#ad" x="1026" y="848"/><use href="#fo" x="1046" y="848"/><text x="1058.3" y="853">Assets Packs</text>
<use href="#ar" x="1044" y="868"/><use href="#fc" x="1063.3" y="868"/><text x="1076.3" y="873" textLength="98">BOXOPHOBIC</text>
<use href="#ar" x="1044" y="888"/><use href="#fc" x="1063.3" y="888"/><text x="1076.3" y="893">Cursor</text>
<use href="#ad" x="1044" y="908"/><use href="#fo" x="1063.3" y="908"/><text x="1076.3" y="913">DogKnight</text>
<use href="#ar" x="1061.3" y="928"/><use href="#fc" x="1080.7" y="928"/><text x="1093.3" y="933">Animations</text>
<use href="#ar" x="1061.3" y="948"/><use href="#fc" x="1080.7" y="948"/><text x="1093.3" y="953">Animator</text>
<use href="#ar" x="1061.3" y="968"/><use href="#fc" x="1080.7" y="968"/><text x="1093.3" y="973">Material</text>
<rect x="1409" y="613" width="12.7" height="73" rx="6" fill="#5f5f5f"/>
<path d="M1410 605.5H1420L1415 600.5zM1410 964.5H1420L1415 969.5z" fill="#c4c4c4"/>
<path d="M998 977.5H1422" stroke="#232323"/>
<rect x="998" y="978" width="424" height="18" fill="#3c3c3c"/>
<use href="#ctl" x="1013" y="990"/>
<g clip-path="url(#cFoot)"><text x="1024.7" y="996" textLength="470">Assets/Animations/Animators/Enemy_GruntController.controller</text></g>

<!-- Inspector -->
<rect x="1425" y="92" width="495" height="24" fill="#282828"/>
<rect x="1425" y="92" width="119" height="24" rx="2" fill="#3c3c3c"/>
<circle cx="1442.7" cy="105" r="6" fill="#c4c4c4"/><rect x="1441.7" y="104" width="2" height="5" fill="#3c3c3c"/><rect x="1441.7" y="101" width="2" height="2" fill="#3c3c3c"/>
<text x="1455" y="110" textLength="67">Inspector</text>
<circle cx="1562" cy="103" r="5" fill="#c4c4c4"/><rect x="1560" y="109" width="4" height="2" fill="#c4c4c4"/>
<text x="1574" y="110" textLength="58">Lighting</text>
<path d="M1665.5 100H1671L1668.5 105 1671.5 105 1675 100H1678V105L1673 105 1673 108H1678V112H1672.5L1671 108 1668 112H1665.5V107H1670V105.5L1665.5 104z" fill="#a8a8a8"/>
<text x="1685" y="110" textLength="78">Navigation</text>
<use href="#lock" x="1881" y="104"/><use href="#dots" x="1901.7" y="103"/>
<rect x="1425" y="116" width="495" height="880" fill="#383838"/>
<rect x="1425" y="116" width="495" height="68" fill="#3c3c3c"/><path d="M1425 184H1920" stroke="#232323"/>
<path d="M1437.3 142.8 1442 139V141H1447V145H1442V146.7z" fill="#5fe6cf"/>
<path d="M1451.7 150H1457.3V155H1460L1454.5 159.3 1449.3 155H1451.7z" fill="#5fe6cf"/>
<rect x="1446" y="131.7" width="19.4" height="19" rx="2" fill="#c4c4c4"/>
<rect x="1480.5" y="126.5" width="394" height="22" rx="3" fill="#2a2a2a" stroke="#212121"/>
<text x="1484" y="144.5" style="fill:#d2d2d2" textLength="45">GetHit</text>
<text x="1479.7" y="168" style="fill:#a8a8a8">Tag</text>
<rect x="1517.5" y="151.5" width="396" height="22" rx="3" fill="#2a2a2a" stroke="#212121"/>
<use href="#sl" x="1890" y="132"/><use href="#dots" x="1910" y="132"/>
<text x="1449.3" y="206" textLength="49">Motion</text>
<text x="1449.3" y="231" textLength="46">Speed</text>
<text class="dd" x="1467.3" y="256" textLength="67">Multiplier</text>
<text x="1449.3" y="281" textLength="89">Motion Time</text>
<text x="1449.3" y="306" textLength="42">Mirror</text>
<text x="1449.3" y="331" textLength="89">Cycle Offset</text>
<text x="1449.3" y="356" textLength="49">Foot IK</text>
<text x="1449.3" y="381" textLength="100">Write Defaults</text>
<rect x="1623.5" y="190" width="291" height="21.5" rx="3" fill="#2a2a2a" stroke="#212121"/>
<rect x="1891" y="190.5" width="23" height="21" fill="#383838"/>
<path d="M1628 202H1631M1632 205 1636.5 197 1641 205z" fill="#5fe6cf" stroke="#5fe6cf" stroke-width=".6"/>
<text x="1643.3" y="207" textLength="45" style="fill:#d2d2d2">GetHit</text>
<use href="#tgt" x="1902.3" y="200.7"/>
<rect x="1623.5" y="215" width="291" height="21.5" rx="3" fill="#2a2a2a" stroke="#212121"/>
<text x="1627" y="232">1</text>
<rect x="1623.5" y="239.5" width="162" height="22" rx="3" fill="#333" stroke="#2a2a2a"/>
<path d="M1769.5 248H1779.5L1774.5 253z" fill="#777"/>
<use href="#box" x="1798.5" y="251"/><use href="#box" x="1798.5" y="276"/><use href="#box" x="1798.5" y="301"/><use href="#box" x="1798.5" y="326"/>
<text x="1812.3" y="256" textLength="74">Parameter</text><text x="1812.3" y="281" textLength="74">Parameter</text><text x="1812.3" y="306" textLength="74">Parameter</text><text x="1812.3" y="331" textLength="74">Parameter</text>
<use href="#box" x="1631.7" y="301"/>
<rect x="1623.5" y="314.5" width="162" height="22" rx="3" fill="#2a2a2a" stroke="#212121"/>
<text x="1627" y="332">0</text>
<use href="#box" x="1631.7" y="351"/><use href="#box" x="1631.7" y="376"/>
<path d="M1627.5 376.5 1630.5 379.5 1636.5 372.5" fill="none" stroke="#eaeaea" stroke-width="1.6"/>
<rect x="1448" y="390" width="465" height="62.3" rx="3" fill="#414141" stroke="#2a2a2a"/>
<path d="M1449 390.5H1912V413H1448V392z" fill="#3a3a3a"/><path d="M1448 413.5H1913" stroke="#2a2a2a"/>
<text x="1457.7" y="408" textLength="79">Transitions</text>
<g clip-path="url(#cMute)"><text x="1830" y="408" textLength="35">Solo</text><text x="1870.3" y="408" textLength="38">Mute</text></g>
<use href="#eq" x="1455" y="429"/>
<text x="1475.3" y="439" textLength="145">GetHit -&gt; New State</text>
<use href="#box" x="1834.6" y="434"/><use href="#box" x="1874.6" y="434"/>
<path d="M1862 452.5V472Q1862 476 1866 476H1897.5Q1901.5 476 1901.5 472V452.5" fill="#3c3c3c" stroke="#2a2a2a"/>
<rect x="1875.3" y="462.5" width="10.7" height="1.6" fill="#8a8a8a"/>
<path d="M1448 484.5H1914" stroke="#1f1f1f"/>
<rect x="1448" y="485" width="466" height="26" fill="#3d3d3d"/><path d="M1448 511.5H1914" stroke="#2c2c2c"/>
<path d="M1455 494H1465L1460 503z" fill="#737373"/>
<rect x="1474.3" y="490.7" width="15" height="16" rx="1" fill="#e8e8e8"/><path d="M1479 494 1478 503M1484 494 1483 503M1477 496.5H1486M1477 500.5H1486" stroke="#3a8a46" stroke-width="1.3"/>
<use href="#box" x="1505.6" y="498"/><path d="M1501.5 498.5 1504.5 501.5 1510.5 494.5" fill="none" stroke="#eaeaea" stroke-width="1.6"/>
<text class="bd" x="1526.7" y="504" textLength="94.5">(Stop Agent)</text>
<use href="#sl" x="1874" y="498"/><use href="#dots" x="1899" y="498"/>
<text class="dd" x="1449.3" y="531" textLength="42">Script</text>
<rect x="1623.5" y="515" width="291" height="21.5" rx="3" fill="#303030" stroke="#2a2a2a"/>
<rect x="1629.3" y="520" width="11" height="12.5" fill="#6e7b70"/><text x="1631" y="530" style="font-size:10px;fill:#3a6a44;letter-spacing:0">#</text>
<text class="dd" x="1643.3" y="532" textLength="75">StopAgent</text>
<g opacity=".6"><use href="#tgt" x="1902.3" y="526"/></g>
<rect x="1538" y="550" width="285.5" height="28.3" rx="3" fill="#585858" stroke="#303030"/>
<text x="1681" y="569.5" text-anchor="middle" style="fill:#dcdcdc">Add Behaviour</text>
<path d="M1425 939.5H1920" stroke="#232323"/><rect x="1425" y="940" width="495" height="25" fill="#3c3c3c"/><path d="M1425 965.5H1920" stroke="#232323"/>
<rect x="1425" y="966" width="495" height="30" fill="#3c3c3c"/>
<text class="bd" x="1434.7" y="958.5" textLength="96.5" style="fill:#b8b8b8">Asset Labels</text>
<circle cx="1902.7" cy="982.7" r="12.3" fill="#1f4a8a"/>
<path d="M1895 979 1899 975 1909 984 1904 989z" fill="#fff"/>
<text x="1742.7" y="982.5" textLength="160" style="font-size:19px;fill:#b4b4b4;letter-spacing:0">CSDN @傻 ' Q*爱</text>
</svg>
</body></html>
